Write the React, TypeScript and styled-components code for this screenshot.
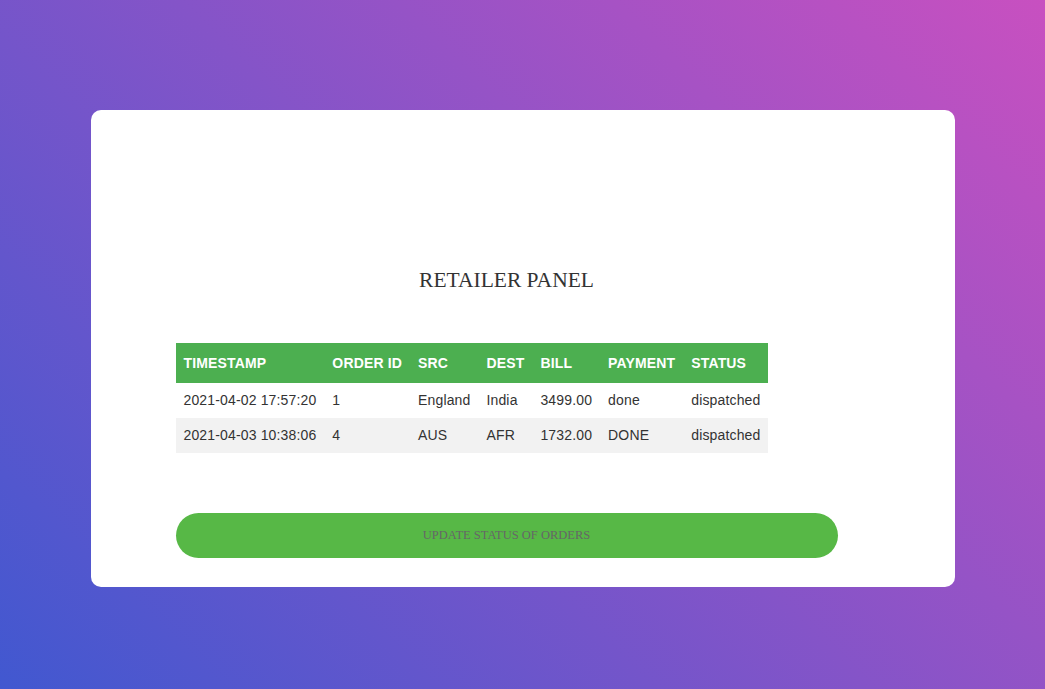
import React from "react";
import styled, { createGlobalStyle } from "styled-components";

const Global = createGlobalStyle`
  html, body { margin: 0; padding: 0; }
  body { font-family: "Liberation Serif", "Times New Roman", serif; }
  * { box-sizing: border-box; }
`;

const Page = styled.div`
  width: 100%;
  min-height: 100vh;
  display: flex;
  align-items: center;
  justify-content: center;
  padding: 15px;
  background: linear-gradient(-135deg, #c850c0, #4158d0);
`;

const Card = styled.div`
  width: 864px;
  background: #fff;
  border-radius: 10px;
  padding: 157px 117px 29px 85px;
  display: flex;
  flex-direction: column;
  margin-top: 8px;
`;

const Title = styled.h1`
  margin: 0 0 50px;
  font-family: "Liberation Serif", "Times New Roman", serif;
  font-weight: normal;
  font-size: 21.5px;
  line-height: 26px;
  color: #333;
  text-align: center;
`;

const Table = styled.table`
  border-collapse: collapse;
  font-family: "Liberation Sans", Arial, sans-serif;
  font-size: 14px;
  letter-spacing: 0.15px;
  color: #333;
  align-self: flex-start;
`;

const Th = styled.th`
  padding: 12px 8px;
  line-height: 16px;
  text-align: left;
  background: #4caf50;
  color: #fff;
  font-weight: bold;
  white-space: nowrap;
`;

const Row = styled.tr<{ $even?: boolean }>`
  background: ${(p) => (p.$even ? "#f2f2f2" : "#fff")};
`;

const Td = styled.td`
  padding: 8px;
  line-height: 19px;
  white-space: nowrap;
`;

const Button = styled.button`
  margin-top: 60px;
  width: 100%;
  height: 45px;
  border: none;
  border-radius: 23px;
  background: #57b846;
  color: #666;
  font-family: "Liberation Serif", "Times New Roman", serif;
  font-size: 12.5px;
  text-transform: uppercase;
  cursor: pointer;
`;

const headers = ["TIMESTAMP", "ORDER ID", "SRC", "DEST", "BILL", "PAYMENT", "STATUS"];
const rows = [
  ["2021-04-02 17:57:20", "1", "England", "India", "3499.00", "done", "dispatched"],
  ["2021-04-03 10:38:06", "4", "AUS", "AFR", "1732.00", "DONE", "dispatched"],
];

export default function App() {
  return (
    <>
      <Global />
      <Page>
        <Card>
          <Title>RETAILER PANEL</Title>
          <Table>
            <thead>
              <tr>
                {headers.map((h) => (
                  <Th key={h}>{h}</Th>
                ))}
              </tr>
            </thead>
            <tbody>
              {rows.map((r, i) => (
                <Row key={i} $even={i % 2 === 1}>
                  {r.map((c, j) => (
                    <Td key={j}>{c}</Td>
                  ))}
                </Row>
              ))}
            </tbody>
          </Table>
          <Button>Update status of orders</Button>
        </Card>
      </Page>
    </>
  );
}
